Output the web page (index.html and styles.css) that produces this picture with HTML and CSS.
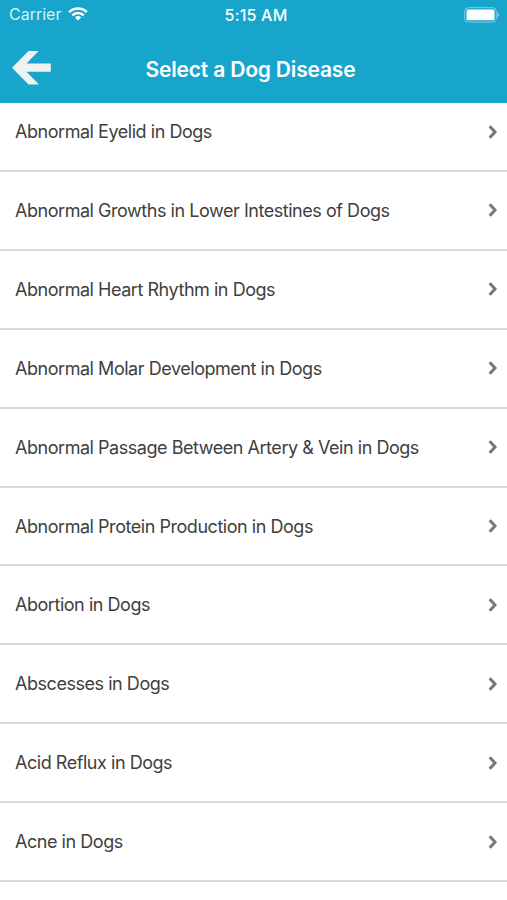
FILE: index.html
```html
<!DOCTYPE html>
<html lang="en">
<head>
<meta charset="utf-8">
<title>Select a Dog Disease</title>
<link rel="stylesheet" href="styles.css">
</head>
<body>
<header class="header">
  <div class="status">
    <div class="carrier"><span>Carrier</span>
      <svg class="wifi" width="20" height="14" viewBox="0 0 20 14"><path d="M1.2 5.2a12.5 12.5 0 0 1 17.6 0M4.3 8.4a8.1 8.1 0 0 1 11.4 0" fill="none" stroke="#fff" stroke-width="2.5"/><path d="M10 13.6 6.9 10.4a4.5 4.5 0 0 1 6.2 0z" fill="#fff"/></svg>
    </div>
    <time class="time">5:15 AM</time>
    <svg class="battery" width="36" height="16" viewBox="0 0 36 16"><rect x=".7" y=".7" width="31.6" height="14.4" rx="3.5" fill="none" stroke="#82cde3"/><rect x="2.5" y="2.5" width="28" height="10.8" rx="1.5" fill="#fff"/><path d="M33.5 5.2q3.5 2.7 0 5.4z" fill="#8ed2e6"/></svg>
  </div>
  <div class="nav">
    <svg class="back" width="40" height="34" viewBox="0 0 40 34"><path d="M0 16.7 16.5 0h10.2L14.5 12.5h24.3v8.2H14.5L27 33.4H16.5z" fill="#f0f1f1"/></svg>
    <h1 class="title">Select a Dog Disease</h1>
  </div>
</header>
<ul class="list" id="list"></ul>
<script src="app.js"></script>
</body>
</html>
```
FILE: styles.css
```css
* { box-sizing: border-box; }
body { margin: 0; height: 900px; overflow: hidden; background: #fff; font-family: Inter, "Liberation Sans", sans-serif; }
.header { height: 103px; background: #18a5cb; color: #fff; }
.status { height: 30px; padding: 0 7px 0 9px; display: grid; grid-template-columns: 1fr auto 1fr; align-items: center; }
.carrier { display: flex; align-items: center; gap: 7px; height: 28px; margin-bottom: 2px; font-size: 16px; color: #d5eff7; }
.time { padding-left: 3px; margin-bottom: 1px; font-size: 16px; font-weight: 500; letter-spacing: .2px; }
.battery { justify-self: end; }
.nav { height: 73px; padding: 21px 18px 0 12px; display: grid; grid-template-columns: 40px 1fr 40px; }
.title { margin: 6px 0 0; font-size: 21px; line-height: 26px; font-weight: 600; letter-spacing: -.18px; text-align: center; white-space: nowrap; }
.list { margin: 0; padding: 0; list-style: none; }
.row { height: 78.9px; padding: 0 9px 0 15px; display: flex; align-items: center; justify-content: space-between; border-bottom: 2px solid #d9d9d9; font-size: 18px; letter-spacing: -.46px; color: #404040; white-space: nowrap; }
.row:first-child { height: 69px; padding-bottom: 10px; }
```
FILE: app.js
```js
const names = ["Abnormal Eyelid in Dogs", "Abnormal Growths in Lower Intestines of Dogs", "Abnormal Heart Rhythm in Dogs", "Abnormal Molar Development in Dogs", "Abnormal Passage Between Artery & Vein in Dogs", "Abnormal Protein Production in Dogs", "Abortion in Dogs", "Abscesses in Dogs", "Acid Reflux in Dogs", "Acne in Dogs"];
const list = document.getElementById("list");
for (const name of names) {
  const row = document.createElement("li");
  row.className = "row";
  const label = document.createElement("span");
  label.textContent = name;
  row.append(label);
  row.insertAdjacentHTML("beforeend", '<svg width="10" height="14" viewBox="0 0 10 14"><path d="M1.7 1.2 7 7 1.7 12.8" fill="none" stroke="#777" stroke-width="3"/></svg>');
  list.append(row);
}
```
